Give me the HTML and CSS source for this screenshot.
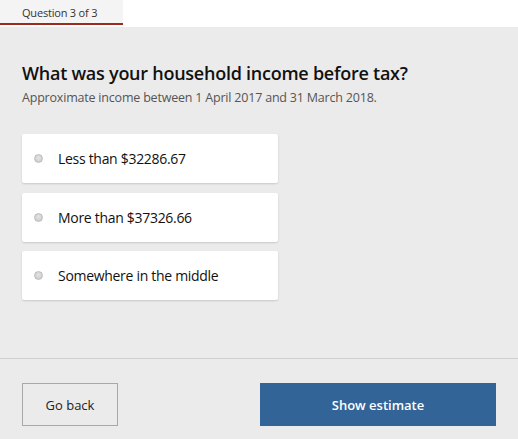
FILE: index.html
```html
<!DOCTYPE html>
<html>
  <head>
    <title>Income estimate</title>
    <link rel="stylesheet" href="styles.css">
  </head>
  <body>
    <div class="tabs">
      <div class="tab">Question 3 of 3</div>
    </div>

    <div class="question">
      <h1>What was your household income before tax?</h1>
      <p class="hint">Approximate income between 1 April 2017 and 31 March 2018.</p>

      <div class="options">
        <label class="option"><span class="radio"></span>Less than $32286.67</label>
        <label class="option"><span class="radio"></span>More than $37326.66</label>
        <label class="option"><span class="radio"></span>Somewhere in the middle</label>
      </div>
    </div>

    <div class="actions">
      <button class="btn btnBack">Go back</button>
      <button class="btn btnPrimary">Show estimate</button>
    </div>
  </body>
</html>
```

FILE: styles.css
```css
/* General */
body {
  margin: 0;
  background-color: #ebebeb;
  font-family: 'Open Sans', 'Noto Sans', sans-serif;
  color: #111;
}

/* Tabs */
.tabs {
  background-color: #fff;
  height: 27px;
}

.tab {
  width: 123px;
  height: 25px;
  box-sizing: border-box;
  background-color: #f4f4f4;
  border-bottom: 2px solid #9e2a1c;
  font-size: 11px;
  line-height: 25px;
  padding-left: 22px;
  color: #333;
  letter-spacing: -0.2px;
}

/* Question */
.question {
  padding: 34px 22px 0 22px;
  height: 332px;
  box-sizing: border-box;
  border-bottom: 1px solid #cfcfcf;
}

.question h1 {
  margin: 0;
  font-size: 18px;
  font-weight: 600;
  letter-spacing: -0.25px;
  line-height: 24px;
}

.hint {
  margin: 4px 0 0 0;
  font-size: 12.5px;
  color: #555;
  letter-spacing: -0.2px;
}

.options {
  margin-top: 28px;
  display: flex;
  flex-direction: column;
  gap: 9.5px;
}

.option {
  width: 256px;
  height: 49px;
  box-sizing: border-box;
  background-color: #fff;
  border-radius: 2px;
  box-shadow: 0 1px 2px rgba(0, 0, 0, 0.15);
  display: flex;
  align-items: center;
  padding-left: 12px;
  font-size: 14px;
  letter-spacing: -0.3px;
  cursor: pointer;
}

.radio {
  width: 9px;
  height: 9px;
  border-radius: 50%;
  background: radial-gradient(circle at 50% 40%, #e4e4e4, #c6c6c6);
  border: 1px solid #bdbdbd;
  box-sizing: border-box;
  margin-right: 15px;
}

/* Buttons */
.actions {
  display: flex;
  justify-content: space-between;
  padding: 24px 22px 0 22px;
}

.btn {
  height: 43px;
  font-family: inherit;
  font-size: 13px;
  cursor: pointer;
}

.btnBack {
  width: 96px;
  background: transparent;
  border: 1px solid #a8a8a8;
  color: #222;
}

.btnPrimary {
  width: 236px;
  background-color: #326497;
  border: none;
  color: #fff;
  font-weight: 600;
}
```
